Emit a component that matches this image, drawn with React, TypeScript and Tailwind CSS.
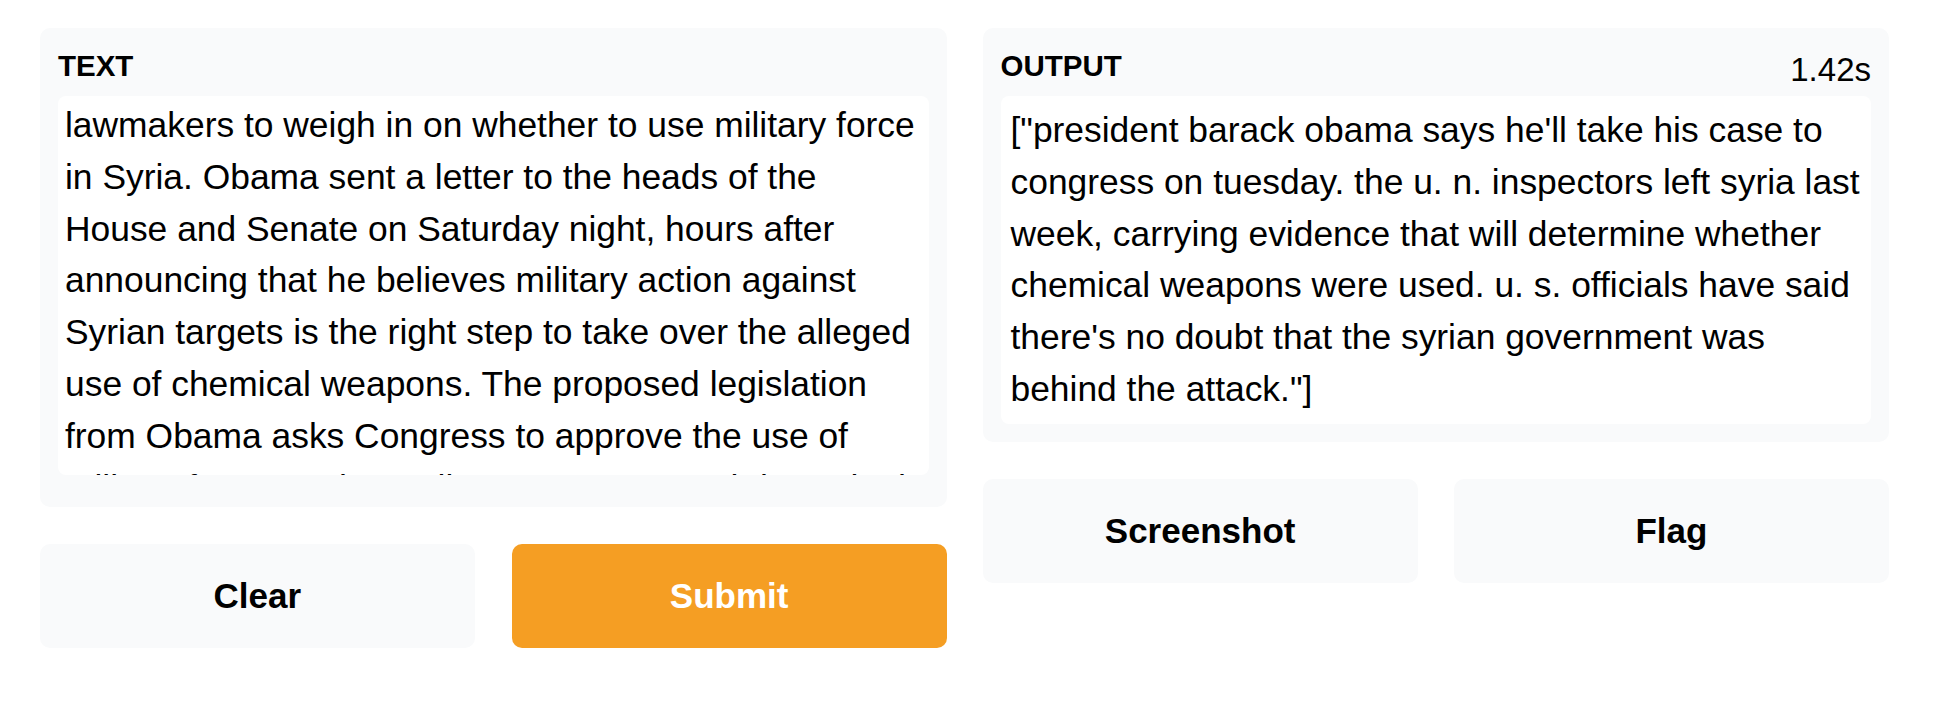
import { ReactNode } from "react";
import clsx from "clsx";

// textarea is scrolled part way down, so only these lines show
const inputLines = [
  "lawmakers to weigh in on whether to use military force",
  "in Syria. Obama sent a letter to the heads of the",
  "House and Senate on Saturday night, hours after",
  "announcing that he believes military action against",
  "Syrian targets is the right step to take over the alleged",
  "use of chemical weapons. The proposed legislation",
  "from Obama asks Congress to approve the use of",
  'military force "to deter, disrupt, prevent and degrade the',
];

const outputLines = [
  "[\"president barack obama says he'll take his case to",
  "congress on tuesday. the u. n. inspectors left syria last",
  "week, carrying evidence that will determine whether",
  "chemical weapons were used. u. s. officials have said",
  "there's no doubt that the syrian government was",
  'behind the attack."]',
];

function Lines({ lines }: { lines: string[] }) {
  return (
    <p className="text-[35.4px] leading-[51.8px]">
      {lines.map((line) => (
        <span key={line} className="block whitespace-nowrap">
          {line}
        </span>
      ))}
    </p>
  );
}

function Panel({
  label,
  extra,
  className,
  children,
}: {
  label: string;
  extra?: ReactNode;
  className?: string;
  children: ReactNode;
}) {
  return (
    <div
      className={clsx(
        "bg-[#f9fafb] rounded-[10px] px-[18px] pt-[21px]",
        className
      )}
    >
      <div className="flex justify-between items-start h-[47px]">
        <span className="text-[29.5px] leading-[34px] font-bold uppercase">
          {label}
        </span>
        {extra}
      </div>
      {children}
    </div>
  );
}

function ActionButton({
  primary,
  children,
}: {
  primary?: boolean;
  children: ReactNode;
}) {
  return (
    <button
      className={clsx(
        "h-[104px] rounded-[10px] text-[35px] font-bold flex items-center justify-center",
        {
          "bg-[#f59e23] text-white": primary,
          "bg-[#f9fafb] text-black": !primary,
        }
      )}
    >
      {children}
    </button>
  );
}

export default function App() {
  return (
    <div className="w-[1934px] h-[706px] bg-white font-['Liberation_Sans',Arial,sans-serif] text-black">
      <div className="grid grid-cols-2 gap-x-[36px] pl-[40px] pr-[45px] pt-[28px]">
        {/* Input column */}
        <div className="flex flex-col gap-[37px]">
          <Panel label="Text" className="pb-[32px]">
            <div className="bg-white rounded-[8px] h-[379px] overflow-hidden px-[7px] pt-[4px]">
              <Lines lines={inputLines} />
            </div>
          </Panel>
          <div className="grid grid-cols-2 gap-[37px]">
            <ActionButton>Clear</ActionButton>
            <ActionButton primary>Submit</ActionButton>
          </div>
        </div>

        {/* Output column */}
        <div className="flex flex-col gap-[37px]">
          <Panel
            label="Output"
            className="pb-[18px]"
            extra={
              <span className="text-[33px] leading-[38px] pt-[2px]">1.42s</span>
            }
          >
            <div className="bg-white rounded-[8px] px-[10px] pt-[9px] pb-[8px]">
              <Lines lines={outputLines} />
            </div>
          </Panel>
          <div className="grid grid-cols-2 gap-[36px]">
            <ActionButton>Screenshot</ActionButton>
            <ActionButton>Flag</ActionButton>
          </div>
        </div>
      </div>
    </div>
  );
}
